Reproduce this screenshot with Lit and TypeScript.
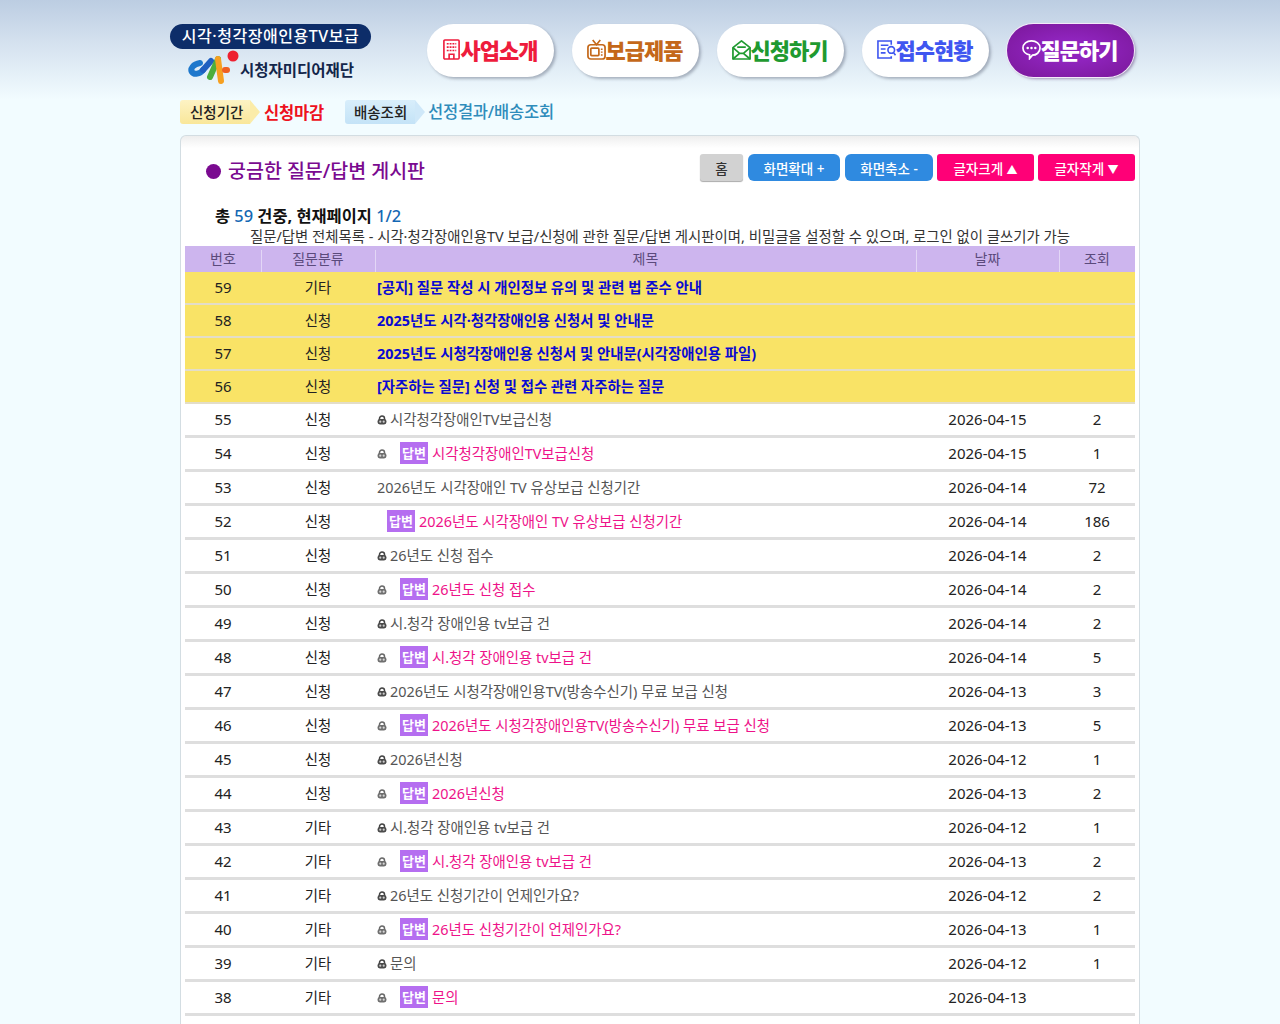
import { LitElement, html, css, svg } from "lit";
import { customElement } from "lit/decorators.js";

type Row = { n: number; cat: string; title: string; date: string; views: string; lock?: boolean; reply?: boolean };

const notices = [
  ["59", "기타", "[공지] 질문 작성 시 개인정보 유의 및 관련 법 준수 안내"],
  ["58", "신청", "2025년도 시각·청각장애인용 신청서 및 안내문"],
  ["57", "신청", "2025년도 시청각장애인용 신청서 및 안내문(시각장애인용 파일)"],
  ["56", "신청", "[자주하는 질문] 신청 및 접수 관련 자주하는 질문"],
];

const rows: Row[] = [
  { n: 55, cat: "신청", title: "시각청각장애인TV보급신청", date: "2026-04-15", views: "2", lock: true },
  { n: 54, cat: "신청", title: "시각청각장애인TV보급신청", date: "2026-04-15", views: "1", lock: true, reply: true },
  { n: 53, cat: "신청", title: "2026년도 시각장애인 TV 유상보급 신청기간", date: "2026-04-14", views: "72" },
  { n: 52, cat: "신청", title: "2026년도 시각장애인 TV 유상보급 신청기간", date: "2026-04-14", views: "186", reply: true },
  { n: 51, cat: "신청", title: "26년도 신청 접수", date: "2026-04-14", views: "2", lock: true },
  { n: 50, cat: "신청", title: "26년도 신청 접수", date: "2026-04-14", views: "2", lock: true, reply: true },
  { n: 49, cat: "신청", title: "시.청각 장애인용 tv보급 건", date: "2026-04-14", views: "2", lock: true },
  { n: 48, cat: "신청", title: "시.청각 장애인용 tv보급 건", date: "2026-04-14", views: "5", lock: true, reply: true },
  { n: 47, cat: "신청", title: "2026년도 시청각장애인용TV(방송수신기) 무료 보급 신청", date: "2026-04-13", views: "3", lock: true },
  { n: 46, cat: "신청", title: "2026년도 시청각장애인용TV(방송수신기) 무료 보급 신청", date: "2026-04-13", views: "5", lock: true, reply: true },
  { n: 45, cat: "신청", title: "2026년신청", date: "2026-04-12", views: "1", lock: true },
  { n: 44, cat: "신청", title: "2026년신청", date: "2026-04-13", views: "2", lock: true, reply: true },
  { n: 43, cat: "기타", title: "시.청각 장애인용 tv보급 건", date: "2026-04-12", views: "1", lock: true },
  { n: 42, cat: "기타", title: "시.청각 장애인용 tv보급 건", date: "2026-04-13", views: "2", lock: true, reply: true },
  { n: 41, cat: "기타", title: "26년도 신청기간이 언제인가요?", date: "2026-04-12", views: "2", lock: true },
  { n: 40, cat: "기타", title: "26년도 신청기간이 언제인가요?", date: "2026-04-13", views: "1", lock: true, reply: true },
  { n: 39, cat: "기타", title: "문의", date: "2026-04-12", views: "1", lock: true },
  { n: 38, cat: "기타", title: "문의", date: "2026-04-13", views: "", lock: true, reply: true },
];

const lockIcon = html`<svg class="lock" viewBox="0 0 10 10" width="10" height="10" aria-hidden="true">
  <path d="M2.500 5V3.500a2.500 2.500 0 0 1 5 0V5" fill="none" stroke="#444" stroke-width="1.500"/>
  <rect x="0.500" y="4" width="9" height="5.500" rx="2.400" fill="#4a4a4a"/>
  <circle cx="3.300" cy="6.700" r="1.100" fill="#ccc"/><circle cx="6.700" cy="6.700" r="1.100" fill="#ccc"/>
</svg>`;

const navIcons = {
  building: svg`<g fill="none" stroke="#ee1c3c" stroke-width="1.700"><rect x="2" y="1" width="16" height="20" rx="1"/><path d="M5 5h10M5 8.500h10M5 12h10" stroke-dasharray="2 1"/><path d="M7.500 21v-5h5v5"/></g>`,
  tv: svg`<g fill="none" stroke="#c4681a" stroke-width="1.800"><path d="M6 1l4 5 4-5"/><rect x="1" y="6" width="18" height="15" rx="3"/><rect x="4" y="9.500" width="8.500" height="8" rx="1"/><path d="M15.500 10v1.500M15.500 13v1.500M15.500 16v1.500"/></g>`,
  mail: svg`<g fill="none" stroke="#1f9a30" stroke-width="1.800" stroke-linejoin="round"><path d="M1 9L10 2l9 7v12H1z"/><path d="M1 9l7 6h4l7-6M1 21l7-6M19 21l-7-6"/><path d="M5.500 8.500h9"/></g>`,
  doc: svg`<g fill="none" stroke="#3f56f0" stroke-width="1.700"><path d="M15 6V2H1v18h14v-2"/><path d="M4 6.500h8M4 10.500h5M4 14.500h5"/><circle cx="15" cy="11.500" r="3.500"/><path d="M17.500 14.500l2 2.500"/></g>`,
  chat: svg`<g fill="none" stroke="#fff" stroke-width="1.800"><path d="M10 2c5 0 9 3 9 7.500s-4 7.500-8 7.500l-3 3.500v-3.800C4 16 1 13 1 9.500 1 5 5 2 10 2z"/></g><g fill="#fff"><circle cx="6" cy="9.500" r="1.300"/><circle cx="10" cy="9.500" r="1.300"/><circle cx="14" cy="9.500" r="1.300"/></g>`,
};

const navs = [
  { label: "사업소개", icon: navIcons.building, cls: "red" },
  { label: "보급제품", icon: navIcons.tv, cls: "brown" },
  { label: "신청하기", icon: navIcons.mail, cls: "green" },
  { label: "접수현황", icon: navIcons.doc, cls: "blue" },
  { label: "질문하기", icon: navIcons.chat, cls: "active" },
];

@customElement("app-root")
export class AppRoot extends LitElement {
  static styles = css`
    :host {
      display: block;
      height: 1024px;
      overflow: hidden;
      background: linear-gradient(#bccde2 0, #d3e0ee 40px, #f2fcff 100px);
      font-family: "Noto Sans", "Noto Sans CJK KR", sans-serif;
      color: #222;
    }
    .page { width: 970px; padding: 24px 0 0 170px; }
    .top { display: flex; height: 54px; }
    .brand { width: 201px; flex: none; display: flex; flex-direction: column; }
    .pill {
      height: 25px; border-radius: 13px; background: #0d2d69; color: #fff;
      font-size: 16px; font-weight: 500; line-height: 25px; text-align: center; white-space: nowrap; letter-spacing: .55px;
    }
    .org { display: flex; align-items: center; height: 36px; padding-left: 17px; margin-top: 1px; }
    .org svg { flex: none; }
    .org span { font-size: 15.500px; font-weight: 700; color: #13264a; margin-left: -1px; margin-top: 2px; white-space: nowrap; }
    nav { display: flex; margin-left: 56px; gap: 18px; }
    .nav {
      width: 127px; height: 53px; border-radius: 27px; background: #fff; box-sizing: border-box; padding: 0 2px 2px 0;
      box-shadow: 2px 2px 3px rgba(90, 100, 120, .45);
      display: flex; align-items: center; justify-content: center;
      font-size: 22px; line-height: 50px; font-weight: 900; letter-spacing: -1px; white-space: nowrap;
    }
    .nav svg { flex: none; }
    .red { color: #ee1c3c; } .brown { color: #c4681a; } .green { color: #1f9a30; } .blue { color: #3f56f0; }
    .active { background: radial-gradient(ellipse at center, #8f24bd 30%, #7a1799 100%); color: #fff; box-shadow: 0 0 0 1px #f4e9f9, 2px 2px 3px rgba(90, 60, 120, .5); }
    .status { display: flex; align-items: center; height: 24px; margin: 22px 0 0 10px; white-space: nowrap; line-height: 22px; }
    .tag {
      position: relative; width: 60px; padding-left: 10px; height: 24px; line-height: 25px;
      font-size: 14.500px; font-weight: 500; color: #222; border-radius: 3px 0 0 3px;
      margin-right: 14px;
    }
    .tag::after {
      content: ""; position: absolute; left: 70px; top: 0; width: 0; height: 0;
      border-left: 10px solid; border-top: 12px solid transparent; border-bottom: 12px solid transparent;
    }
    .yellow { background: linear-gradient(#fdf3c4, #f9e79a); } .yellow::after { border-left-color: #fbeca8; }
    .sky { background: linear-gradient(#d8eefb, #c4e3f7); padding-left: 9px; width: 61px; } .sky::after { border-left-color: #cfe8f9; }
    .closed { color: #ee1020; font-size: 16.500px; font-weight: 700; margin: 1px 21px 0 0; letter-spacing: -.2px; }
    .result { color: #2f8cbb; font-size: 16.500px; font-weight: 500; margin: 0 0 0 -1px; letter-spacing: -.2px; }
    .box {
      width: 960px; margin: 11px 0 0 10px; border: 1px solid #d3dde2; border-bottom: 0; border-radius: 6px 6px 0 0;
      background: linear-gradient(#eeeeee 0, #fff 12px); height: 900px; overflow: hidden;
      padding: 0 4px; box-sizing: border-box;
    }
    .head { display: flex; justify-content: space-between; padding-top: 16px; height: 58px; box-sizing: border-box; }
    h1 {
      margin: 0 0 0 21px; display: flex; align-items: center; gap: 7px; height: 38px;
      font-size: 19.500px; line-height: 38px; font-weight: 500; color: #7a0a90; white-space: nowrap;
    }
    h1 i { width: 15px; height: 15px; border-radius: 50%; background: #7a0a90; }
    .btns { display: flex; gap: 4px; align-items: flex-start; padding-top: 2px; }
    .btn {
      height: 27px; line-height: 30px; border-radius: 3px; text-align: center; color: #fff;
      font-size: 13.500px; font-weight: 500; white-space: nowrap; box-sizing: border-box;
    }
    .btn small { font-size: 11px; }
    .home { width: 43px; background: #d2d2d2; color: #333; margin-right: 1px; box-shadow: 0 1px 1px #aaa; }
    .zoomin { width: 92px; background: #2f8ae0; border-radius: 6px; }
    .zoomout { width: 88px; background: #2f8ae0; border-radius: 6px; margin-left: 1px; }
    .fs { width: 97px; background: #ff0077; }
    .count { margin: 12px 0 0 30px; font-size: 16.400px; font-weight: 700; color: #111; line-height: 20px; white-space: nowrap; }
    .count b { font-weight: 500; color: #1468b4; }
    .desc { text-align: center; font-size: 14.400px; padding-top: 2px; line-height: 18px; color: #333; white-space: nowrap; }
    .row {
      display: grid; grid-template-columns: 76px 114px 541px 143px 76px; align-items: center;
      width: 950px; box-sizing: border-box; font-size: 14.400px; line-height: 20px;
    }
    .row > div { text-align: center; white-space: nowrap; }
    .row > .d { font-size: 15px; margin-bottom: 2px; }
    .row > .t { text-align: left; padding-left: 2px; color: #555; display: flex; align-items: center; }
    .th { height: 26px; background: #cdb5ee; color: #5b4a7c; font-size: 14px; }
    .th > div { position: relative; height: 26px; line-height: 26px; }
    .th > div + div::before { content: ""; position: absolute; left: 0; top: 4px; bottom: 0; width: 1px; background: #e3d7f6; }
    .notice { height: 33px; background: #f9e366; border-bottom: 2px solid #e3ddc8; color: #222; }
    .notice > .t { color: #0a0ad2; font-weight: 700; }
    .item { height: 34px; border-bottom: 3px solid #dedede; background: #fff; color: #222; }
    .lock { flex: none; margin-right: 3px; }
    .reply .lock { margin-right: 13px; opacity: .8; }
    .badge {
      flex: none; width: 28px; height: 22px; line-height: 22px; background: #b56ef0; color: #fff;
      font-size: 13px; font-weight: 700; text-align: center; margin: -1px 4px 1px 0; font-style: normal;
    }
    .reply .t span { color: #ee1289; }
    .row > .t.indent { padding-left: 12px; }
  `;

  render() {
    return html`<div class="page">
      <div class="top">
        <div class="brand">
          <div class="pill">시각·청각장애인용TV보급</div>
          <div class="org">
            <svg viewBox="0 0 54 36" width="54" height="36" aria-hidden="true" fill="none" stroke-linecap="round" stroke-width="6">
              <path d="M13 13C6 14 3 19 5 22c2 3 8 2 11-2" stroke="#1e78cc"/>
              <path d="M16 20l8-9" stroke="#1f5fc0"/>
              <path d="M23 27l8-18" stroke="#4cae3c"/>
              <path d="M31 9l3 22" stroke="#f6a021"/>
              <path d="M38 20h2" stroke="#ef5f22"/>
              <circle cx="46" cy="6" r="5.500" fill="#ee2030"/>
            </svg>
            <span>시청자미디어재단</span>
          </div>
        </div>
        <nav>
          ${navs.map(
            (n) => html`<div class="nav ${n.cls}">
              <svg viewBox="0 0 20 22" width="19" height="21" aria-hidden="true">${n.icon}</svg>${n.label}
            </div>`
          )}
        </nav>
      </div>
      <div class="status">
        <span class="tag yellow">신청기간</span><span class="closed">신청마감</span>
        <span class="tag sky">배송조회</span><span class="result">선정결과/배송조회</span>
      </div>
      <div class="box">
        <div class="head">
          <h1><i></i>궁금한 질문/답변 게시판</h1>
          <div class="btns">
            <div class="btn home">홈</div>
            <div class="btn zoomin">화면확대 +</div>
            <div class="btn zoomout">화면축소 -</div>
            <div class="btn fs">글자크게 <small>▲</small></div>
            <div class="btn fs">글자작게 <small>▼</small></div>
          </div>
        </div>
        <div class="count">총 <b>59</b> 건중, 현재페이지 <b>1/2</b></div>
        <div class="desc">질문/답변 전체목록 - 시각·청각장애인용TV 보급/신청에 관한 질문/답변 게시판이며, 비밀글을 설정할 수 있으며, 로그인 없이 글쓰기가 가능</div>
        <div class="row th"><div>번호</div><div>질문분류</div><div>제목</div><div>날짜</div><div>조회</div></div>
        ${notices.map(
          ([n, c, t]) => html`<div class="row notice"><div class="d">${n}</div><div>${c}</div><div class="t">${t}</div><div></div><div></div></div>`
        )}
        ${rows.map(
          (r) => html`<div class="row item ${r.reply ? "reply" : ""}">
            <div class="d">${r.n}</div><div>${r.cat}</div>
            <div class="t ${r.reply && !r.lock ? "indent" : ""}">
              ${r.lock ? lockIcon : ""}${r.reply ? html`<i class="badge">답변</i>` : ""}<span>${r.title}</span>
            </div>
            <div class="d">${r.date}</div><div class="d">${r.views}</div>
          </div>`
        )}
      </div>
    </div>`;
  }
}
